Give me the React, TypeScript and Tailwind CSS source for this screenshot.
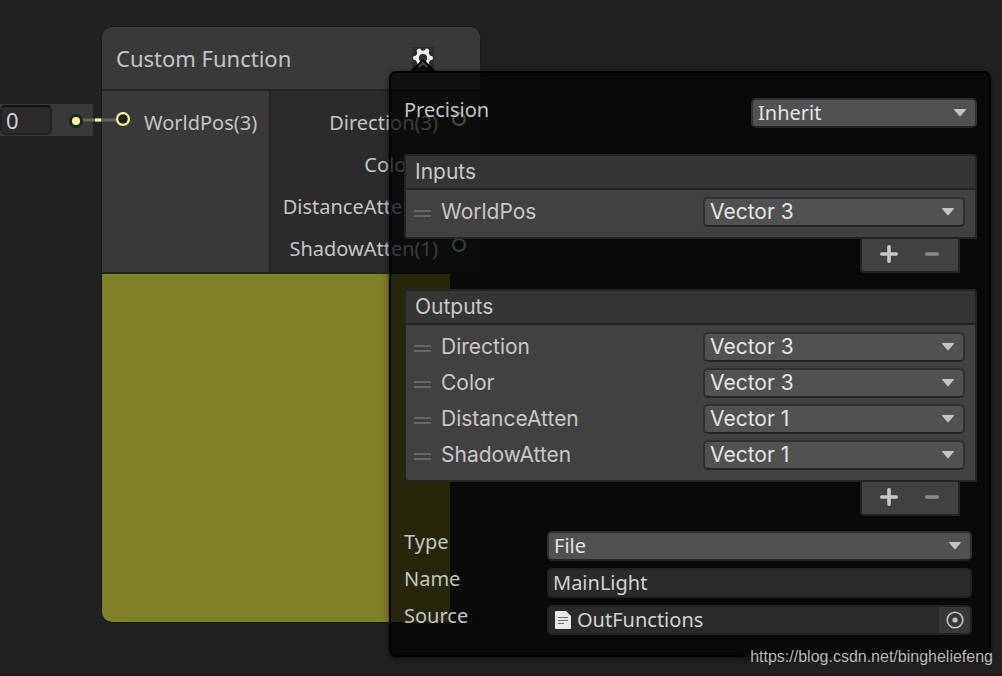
import clsx from "clsx";

type Slot = {
  name: string;
  type: string;
};

const inputs: Slot[] = [{ name: "WorldPos", type: "Vector 3" }];

const outputs: Slot[] = [
  { name: "Direction", type: "Vector 3" },
  { name: "Color", type: "Vector 3" },
  { name: "DistanceAtten", type: "Vector 1" },
  { name: "ShadowAtten", type: "Vector 1" },
];

const vectorTypes = ["Vector 1", "Vector 2", "Vector 3", "Vector 4"];

const Dropdown = ({
  id,
  value,
  options,
  className,
}: {
  id: string;
  value: string;
  options: string[];
  className?: string;
}) => {
  return (
    <div className={clsx("relative", className)}>
      <select
        id={id}
        defaultValue={value}
        className="block h-[30px] w-full appearance-none rounded-[5px] border-2 border-[#303030] border-b-[#242424] bg-[#515151] pl-[5px] leading-6 text-[#e4e4e4] outline-none"
      >
        {options.map((option) => (
          <option key={option}>{option}</option>
        ))}
      </select>
      <svg
        viewBox="0 0 12 8"
        className="pointer-events-none absolute top-[11px] right-[11px] h-2 w-3 fill-[#c4c4c4]"
      >
        <path d="M.6 0h10.8q.9.1.3 1L6.6 7q-.6.6-1.2 0L.3 1Q-.3.1.6 0Z" />
      </svg>
    </div>
  );
};

const Port = ({ className }: { className: string }) => (
  <svg viewBox="0 0 14 14" className={clsx("size-3.5 shrink-0", className)}>
    <circle cx="7" cy="7" r="5.9" fill="#212121" stroke="currentColor" strokeWidth="2.2" />
  </svg>
);

const SlotList = ({ title, slots }: { title: string; slots: Slot[] }) => {
  return (
    <section className="font-['Inter',sans-serif] text-[21px] leading-6">
      <h2 className="h-[34px] rounded-tr-[4px] border-2 border-b-0 border-[#242424] bg-[#353535] px-[9px] py-[4px] text-[#c8c8c8]">
        {title}
      </h2>
      <ul className="flex flex-col gap-[6px] rounded-bl-[4px] border-2 border-[#242424] bg-[#414141] pt-[7px] pr-[10px] pb-[10px] pl-2">
        {slots.map((slot) => (
          <li key={slot.name} className="flex items-center">
            <span className="mt-[3px] h-[7px] w-[17px] border-y-2 border-[#666]" />
            <label
              htmlFor={`${title}-${slot.name}`}
              className="ml-[10px] flex-1 text-[#c8c8c8]"
            >
              {slot.name}
            </label>
            <Dropdown
              id={`${title}-${slot.name}`}
              value={slot.type}
              options={vectorTypes}
              className="w-[262px]"
            />
          </li>
        ))}
      </ul>
      <div className="mr-[17px] ml-auto flex h-[34px] w-[100px] rounded-bl-[4px] border-2 border-t-0 border-[#242424] bg-[#414141] px-[5px]">
        <button aria-label={`Add to ${title}`} className="flex flex-1 justify-center pt-1.5">
          <svg viewBox="0 0 18 18" className="size-[18px]">
            <path d="M9 1.8v14.4M1.8 9h14.4" stroke="#c8c8c8" strokeWidth="3.6" strokeLinecap="round" />
          </svg>
        </button>
        <button aria-label={`Remove from ${title}`} className="flex flex-1 justify-center pt-1.5">
          <svg viewBox="0 0 18 18" className="size-[18px]">
            <path d="M3.8 9h10.4" stroke="#8a8a8a" strokeWidth="3.6" strokeLinecap="round" />
          </svg>
        </button>
      </div>
    </section>
  );
};

const GraphNode = () => {
  return (
    <article className="absolute top-[27px] left-[102px] w-[378px] overflow-hidden rounded-[10px] shadow-[0_0_0_1px_#1a1a1a]">
      <header className="flex h-[64px] items-center justify-between border-b-2 border-[#242424] bg-[#393939] pr-[46px] pl-[14px]">
        <h1 className="text-[22px] leading-7">Custom Function</h1>
        <button aria-label="Node settings" className="bg-[#2c2c2c]">
          <svg viewBox="0 0 22 22" className="size-[22px]">
            <g stroke="#eee" strokeWidth="4.6" strokeLinecap="round">
              <path d="M3.3 11h15.4M7 4l8 14M15 4 7 18" />
            </g>
            <circle cx="11" cy="11" r="5.8" fill="#2c2c2c" stroke="#eee" strokeWidth="3.4" />
          </svg>
        </button>
      </header>
      <div className="flex border-b-2 border-[#242424] bg-[#2b2b2b]">
        <ul className="w-[169px] border-r-2 border-[#242424] bg-[#393939] pt-[11px]">
          <li className="flex h-[42px] gap-[14px] pl-[14px]">
            <Port className="mt-[10px] text-[#fbffa0]" />
            <span className="leading-[42px]">WorldPos(3)</span>
          </li>
        </ul>
        <ul className="flex-1 pt-[11px] pr-[14px] pb-[2px]">
          {outputs.map((slot) => (
            <li key={slot.name} className="flex h-[42px] justify-end gap-[14px]">
              <span className="leading-[42px]">
                {slot.name}({slot.type.slice(-1)})
              </span>
              <Port
                className={clsx(
                  "mt-[10px]",
                  slot.type === "Vector 3" ? "text-[#fbffa0]" : "text-[#84e4e7]"
                )}
              />
            </li>
          ))}
        </ul>
      </div>
      {/* Preview */}
      <div className="h-[348px] w-[348px] bg-[#808026]" />
    </article>
  );
};

const DefaultValue = () => {
  return (
    <>
      <div className="absolute top-[104px] left-0 flex h-8 w-[93px] items-center rounded-r-[2px] bg-[#393939]">
        <input
          aria-label="WorldPos"
          defaultValue="0"
          className="h-[30px] w-[52px] rounded-[5px] border-2 border-[#212121] border-t-[#111] bg-[#2a2a2a] pl-1 text-[22px] text-[#d2d2d2] outline-none"
        />
      </div>
      <svg viewBox="0 0 52 16" className="absolute top-[113px] left-[68px] h-4 w-[52px]">
        <path d="M8 7h40" stroke="#646550" strokeWidth="3" />
        <path d="M27 7h6" stroke="#fbffa0" strokeWidth="3" />
        <circle cx="8" cy="8" r="7" fill="#212121" />
        <circle cx="8" cy="8" r="4" fill="#fbffa0" />
      </svg>
    </>
  );
};

const SettingsPopover = () => {
  return (
    <aside className="absolute top-[71px] right-[11px] left-[389px] rounded-[7px] border-2 border-black bg-black/70 pt-[25px] pr-3 pb-[20px] pl-[13px] shadow-[0_2px_6px_rgba(0,0,0,0.5)]">
      <svg viewBox="0 0 28 14" className="absolute -top-[14px] left-[18px] h-3.5 w-7">
        <path d="M1 14 12.5 2.5q1.5-1.5 3 0L27 14" fill="#000" fillOpacity=".7" stroke="#000" strokeWidth="2" />
      </svg>
      <div className="flex justify-between">
        <label htmlFor="precision" className="leading-6">
          Precision
        </label>
        <Dropdown
          id="precision"
          value="Inherit"
          options={["Inherit", "Single", "Half"]}
          className="w-[226px]"
        />
      </div>

      <div className="mt-[26px] flex flex-col gap-4">
        <SlotList title="Inputs" slots={inputs} />
        <SlotList title="Outputs" slots={outputs} />
      </div>

      <div className="mt-[15px] flex flex-col gap-[7px] pr-[5px]">
        <div className="flex">
          <label htmlFor="type" className="w-[143px] leading-[22px]">
            Type
          </label>
          <Dropdown id="type" value="File" options={["File", "String"]} className="flex-1" />
        </div>
        <div className="flex">
          <label htmlFor="name" className="w-[143px] leading-[22px]">
            Name
          </label>
          <input
            id="name"
            defaultValue="MainLight"
            className="h-[30px] min-w-0 flex-1 rounded-[5px] border-2 border-[#212121] bg-[#2a2a2a] pl-1 text-[#d2d2d2] outline-none"
          />
        </div>
        <div className="flex">
          <label htmlFor="source" className="w-[143px] leading-[22px]">
            Source
          </label>
          <div className="flex h-[30px] min-w-0 flex-1 items-center overflow-hidden rounded-[5px] border-2 border-[#212121] bg-[#2a2a2a]">
            <svg viewBox="0 0 16 18" className="ml-[6px] h-[18px] w-4">
              <path d="M1 0h10l5 5v12q0 1-1 1H1q-1 0-1-1V1q0-1 1-1Z" fill="#e8e8e8" />
              <path d="M3 6.5h10M3 9.5h10M3 12.5h6" stroke="#666" strokeWidth="1.1" />
            </svg>
            <input
              id="source"
              readOnly
              defaultValue="OutFunctions"
              className="ml-[6px] min-w-0 flex-1 text-[#d2d2d2] outline-none"
            />
            <button
              aria-label="Select source"
              className="flex h-full w-[31px] items-center justify-center bg-[#373737]"
            >
              <svg viewBox="0 0 18 18" className="size-[18px]">
                <circle cx="9" cy="9" r="7.8" fill="none" stroke="#c4c4c4" strokeWidth="1.6" />
                <circle cx="9" cy="9" r="2.6" fill="#c4c4c4" />
              </svg>
            </button>
          </div>
        </div>
      </div>
    </aside>
  );
};

const App = () => {
  return (
    <main className="relative min-h-screen overflow-hidden border-b border-[#2a1418] bg-[#212121] font-['Noto_Sans',sans-serif] text-[20px] text-[#c4c4c4]">
      <GraphNode />
      <DefaultValue />
      <SettingsPopover />
      <footer className="absolute right-[9px] bottom-[8px] font-['Liberation_Sans',sans-serif] text-[16px] leading-5 text-[#b8b8b8]">
        https://blog.csdn.net/bingheliefeng
      </footer>
    </main>
  );
};

export default App;
